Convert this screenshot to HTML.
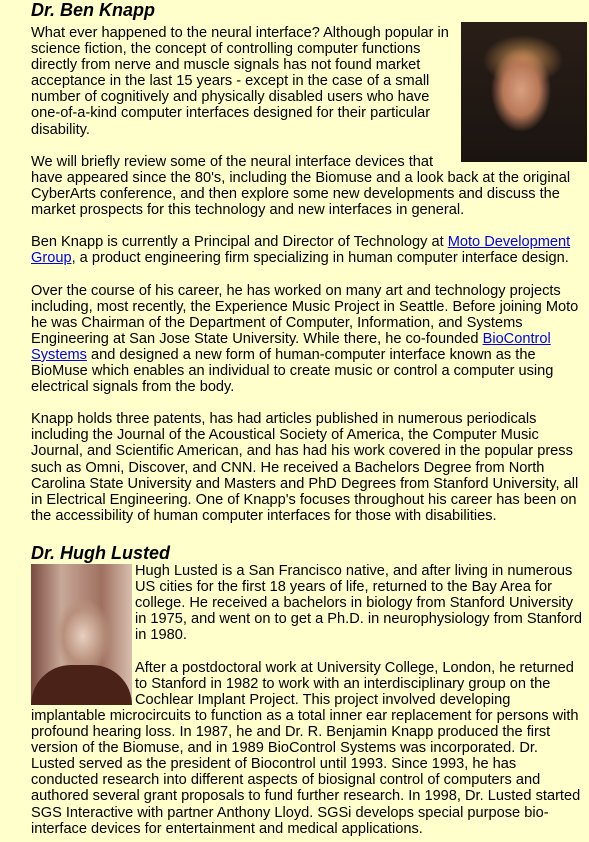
<!DOCTYPE html>
<html><head><meta charset="utf-8"><style>
body{margin:0;background:#ffffcc;width:589px;height:842px;overflow:hidden;position:relative;font-family:"Liberation Sans",Arial,sans-serif;color:#000;}
h2{position:absolute;margin:0;font-size:18px;font-style:italic;font-weight:bold;line-height:20px;left:31px;}
.t{position:absolute;left:31px;font-size:14.6px;line-height:16.1px;white-space:nowrap;}
a{color:#0000ee;}
.img1{position:absolute;left:461px;top:22px;width:126px;height:140px;background:radial-gradient(ellipse 30px 42px at 60px 68px,#d8a080 0%,#b87858 60%,transparent 100%),radial-gradient(ellipse 40px 25px at 62px 38px,#c89050 0%,transparent 100%),linear-gradient(#2a1e18,#1a1410);}
.img2{position:absolute;left:31px;top:564px;width:101px;height:141px;background:radial-gradient(ellipse 28px 38px at 52px 72px,#e8cfc0 0%,#b8907c 70%,transparent 100%),linear-gradient(90deg,#7a4a40,#c8a898 30%,#a07060 70%,#d8c0b0);}
.img2:after{content:"";position:absolute;left:0;bottom:0;width:101px;height:40px;background:#4a2218;border-radius:40px 40px 0 0;}
</style></head><body>
<h2 style="top:0px">Dr. Ben Knapp</h2>
<div class="img1"></div>
<div class="t" style="top:25px">What ever happened to the neural interface? Although popular in<br>science fiction, the concept of controlling computer functions<br>directly from nerve and muscle signals has not found market<br>acceptance in the last 15 years - except in the case of a small<br>number of cognitively and physically disabled users who have<br>one-of-a-kind computer interfaces designed for their particular<br>disability.<br><br>We will briefly review some of the neural interface devices that<br>have appeared since the 80's, including the Biomuse and a look back at the original<br>CyberArts conference, and then explore some new developments and discuss the<br>market prospects for this technology and new interfaces in general.<br><br>Ben Knapp is currently a Principal and Director of Technology at <a href="#">Moto Development</a><br><a href="#">Group</a>, a product engineering firm specializing in human computer interface design.<br><br>Over the course of his career, he has worked on many art and technology projects<br>including, most recently, the Experience Music Project in Seattle. Before joining Moto<br>he was Chairman of the Department of Computer, Information, and Systems<br>Engineering at San Jose State University. While there, he co-founded <a href="#">BioControl</a><br><a href="#">Systems</a> and designed a new form of human-computer interface known as the<br>BioMuse which enables an individual to create music or control a computer using<br>electrical signals from the body.<br><br>Knapp holds three patents, has had articles published in numerous periodicals<br>including the Journal of the Acoustical Society of America, the Computer Music<br>Journal, and Scientific American, and has had his work covered in the popular press<br>such as Omni, Discover, and CNN. He received a Bachelors Degree from North<br>Carolina State University and Masters and PhD Degrees from Stanford University, all<br>in Electrical Engineering. One of Knapp's focuses throughout his career has been on<br>the accessibility of human computer interfaces for those with disabilities.</div>
<h2 style="top:543px">Dr. Hugh Lusted</h2>
<div class="img2"></div>
<div class="t" style="top:563px;left:135px">Hugh Lusted is a San Francisco native, and after living in numerous<br>US cities for the first 18 years of life, returned to the Bay Area for<br>college. He received a bachelors in biology from Stanford University<br>in 1975, and went on to get a Ph.D. in neurophysiology from Stanford<br>in 1980.<br><br>After a postdoctoral work at University College, London, he returned<br>to Stanford in 1982 to work with an interdisciplinary group on the<br>Cochlear Implant Project. This project involved developing</div>
<div class="t" style="top:708px">implantable microcircuits to function as a total inner ear replacement for persons with<br>profound hearing loss. In 1987, he and Dr. R. Benjamin Knapp produced the first<br>version of the Biomuse, and in 1989 BioControl Systems was incorporated. Dr.<br>Lusted served as the president of Biocontrol until 1993. Since 1993, he has<br>conducted research into different aspects of biosignal control of computers and<br>authored several grant proposals to fund further research. In 1998, Dr. Lusted started<br>SGS Interactive with partner Anthony Lloyd. SGSi develops special purpose bio-<br>interface devices for entertainment and medical applications.</div>
</body></html>
